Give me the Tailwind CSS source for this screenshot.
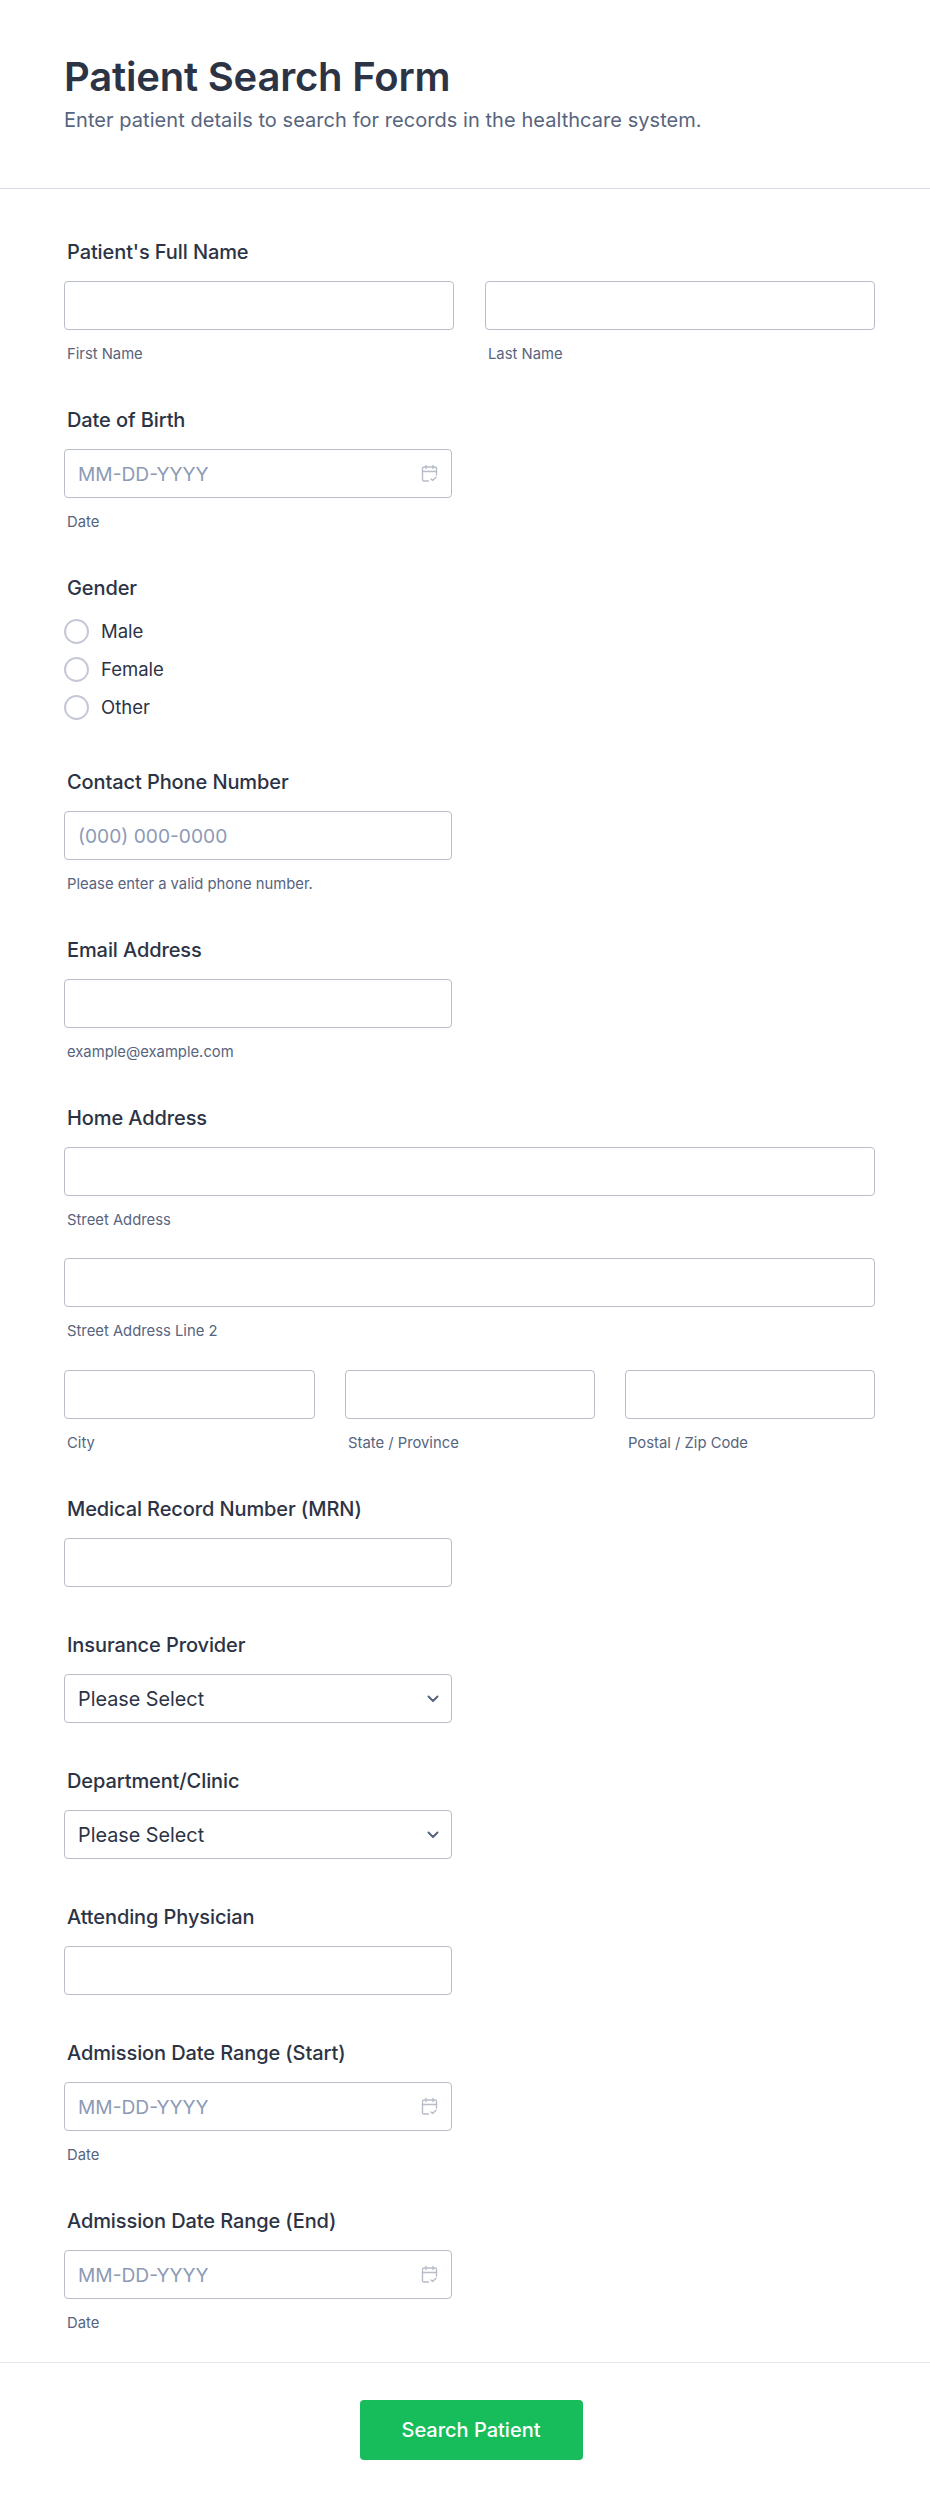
<!DOCTYPE html>
<html lang="en">
<head>
  <meta charset="UTF-8" />
  <title>Patient Search Form</title>
  <script src="https://cdn.jsdelivr.net/npm/@tailwindcss/browser@4"></script>
</head>
<body class="bg-white font-['Inter',sans-serif] text-[#2c3345]">
  <form class="w-[930px] h-[2509px] flex flex-col">
    <header class="h-[189px] border-b border-[#d8dae9] px-16 pt-[53px]">
      <h1 class="text-[40px] leading-[48px] font-semibold tracking-[-0.2px]">Patient Search Form</h1>
      <p class="mt-[5px] text-[20px] leading-[28px] tracking-[0.05px] text-[#57647e]">Enter patient details to search for records in the healthcare system.</p>
    </header>

    <div class="flex-1 pl-16 pr-[55px] pt-[49px] flex flex-col">
      <!-- name -->
      <div class="h-[168px]">
        <label class="block pl-[3px] text-[20px] leading-[28px] font-medium tracking-[-0.1px]">Patient's Full Name</label>
        <div class="mt-[15px] flex gap-[31px]">
          <div class="w-[390px]">
            <input class="w-full h-[49px] border border-[#b8bdc9] rounded" />
            <p class="mt-[14px] pl-[3px] text-[14.8px] leading-[20px] text-[#57647e]">First Name</p>
          </div>
          <div class="w-[390px]">
            <input class="w-full h-[49px] border border-[#b8bdc9] rounded" />
            <p class="mt-[14px] pl-[3px] text-[14.8px] leading-[20px] text-[#57647e]">Last Name</p>
          </div>
        </div>
      </div>

      <!-- dob -->
      <div class="h-[168px]">
        <label class="block pl-[3px] text-[20px] leading-[28px] font-medium tracking-[-0.1px]">Date of Birth</label>
        <div class="mt-[15px] relative w-[388px]">
          <input placeholder="MM-DD-YYYY" class="w-full h-[49px] border border-[#b8bdc9] rounded px-[13px] text-[19.2px] placeholder:text-[#8d9ab5]" />
          <svg class="absolute right-[13px] top-[15px] w-[19px] h-[19px] text-[#b8bdc9]" viewBox="0 0 18 19" fill="none" stroke="currentColor" stroke-width="1.4" stroke-linecap="round" stroke-linejoin="round"><path d="M8 17H3.5A1.5 1.5 0 0 1 2 15.5V4.5A1.5 1.5 0 0 1 3.5 3h11A1.5 1.5 0 0 1 16 4.5V11" /><path d="M2 7.5h14M5.5 1.5v3M12.5 1.5v3" /><path d="M10.5 15l1.6 1.6 3.4-3.4" /></svg>
        </div>
        <p class="mt-[14px] pl-[3px] text-[14.8px] leading-[20px] text-[#57647e]">Date</p>
      </div>

      <!-- gender -->
      <div class="h-[194px]">
        <label class="block pl-[3px] text-[20px] leading-[28px] font-medium tracking-[-0.1px]">Gender</label>
        <div class="mt-[17px] flex flex-col gap-[13px]">
          <label class="flex items-center gap-[12px] text-[18.5px] leading-[25px]"><span class="w-[25px] h-[25px] rounded-full border-2 border-[#c5c9d6]"></span><span class="-mt-[1px]">Male</span></label>
          <label class="flex items-center gap-[12px] text-[18.5px] leading-[25px]"><span class="w-[25px] h-[25px] rounded-full border-2 border-[#c5c9d6]"></span><span class="-mt-[1px]">Female</span></label>
          <label class="flex items-center gap-[12px] text-[18.5px] leading-[25px]"><span class="w-[25px] h-[25px] rounded-full border-2 border-[#c5c9d6]"></span><span class="-mt-[1px]">Other</span></label>
        </div>
      </div>

      <!-- phone -->
      <div class="h-[168px]">
        <label class="block pl-[3px] text-[20px] leading-[28px] font-medium tracking-[-0.1px]">Contact Phone Number</label>
        <input placeholder="(000) 000-0000" class="mt-[15px] block w-[388px] h-[49px] border border-[#b8bdc9] rounded px-[13px] text-[19.2px] placeholder:text-[#8d9ab5]" />
        <p class="mt-[14px] pl-[3px] text-[14.8px] leading-[20px] text-[#57647e]">Please enter a valid phone number.</p>
      </div>

      <!-- email -->
      <div class="h-[168px]">
        <label class="block pl-[3px] text-[20px] leading-[28px] font-medium tracking-[-0.1px]">Email Address</label>
        <input class="mt-[15px] block w-[388px] h-[49px] border border-[#b8bdc9] rounded" />
        <p class="mt-[14px] pl-[3px] text-[14.8px] leading-[20px] text-[#57647e]">example@example.com</p>
      </div>

      <!-- address -->
      <div class="h-[391px]">
        <label class="block pl-[3px] text-[20px] leading-[28px] font-medium tracking-[-0.1px]">Home Address</label>
        <input class="mt-[15px] block w-[811px] h-[49px] border border-[#b8bdc9] rounded" />
        <p class="mt-[14px] pl-[3px] text-[14.8px] leading-[20px] text-[#57647e]">Street Address</p>
        <input class="mt-[28px] block w-[811px] h-[49px] border border-[#b8bdc9] rounded" />
        <p class="mt-[14px] pl-[3px] text-[14.8px] leading-[20px] text-[#57647e]">Street Address Line 2</p>
        <div class="mt-[29px] flex gap-[30px]">
          <div class="w-[251px]">
            <input class="w-full h-[49px] border border-[#b8bdc9] rounded" />
            <p class="mt-[14px] pl-[3px] text-[14.8px] leading-[20px] text-[#57647e]">City</p>
          </div>
          <div class="w-[250px]">
            <input class="w-full h-[49px] border border-[#b8bdc9] rounded" />
            <p class="mt-[14px] pl-[3px] text-[14.8px] leading-[20px] text-[#57647e]">State / Province</p>
          </div>
          <div class="w-[250px]">
            <input class="w-full h-[49px] border border-[#b8bdc9] rounded" />
            <p class="mt-[14px] pl-[3px] text-[14.8px] leading-[20px] text-[#57647e]">Postal / Zip Code</p>
          </div>
        </div>
      </div>

      <!-- mrn -->
      <div class="h-[136px]">
        <label class="block pl-[3px] text-[20px] leading-[28px] font-medium tracking-[-0.1px]">Medical Record Number (MRN)</label>
        <input class="mt-[15px] block w-[388px] h-[49px] border border-[#b8bdc9] rounded" />
      </div>

      <!-- insurance -->
      <div class="h-[136px]">
        <label class="block pl-[3px] text-[20px] leading-[28px] font-medium tracking-[-0.1px]">Insurance Provider</label>
        <div class="mt-[15px] relative w-[388px]">
          <select class="w-full h-[49px] appearance-none border border-[#b8bdc9] rounded px-[13px] pt-[2px] text-[19.8px] bg-white"><option>Please Select</option></select>
          <svg class="absolute right-[13px] top-[21px] w-[12px] h-[8px] text-[#57647e]" viewBox="0 0 12 8" fill="none" stroke="currentColor" stroke-width="2" stroke-linecap="round" stroke-linejoin="round"><path d="M1.5 1.5L6 6l4.5-4.5" /></svg>
        </div>
      </div>

      <!-- department -->
      <div class="h-[136px]">
        <label class="block pl-[3px] text-[20px] leading-[28px] font-medium tracking-[-0.1px]">Department/Clinic</label>
        <div class="mt-[15px] relative w-[388px]">
          <select class="w-full h-[49px] appearance-none border border-[#b8bdc9] rounded px-[13px] pt-[2px] text-[19.8px] bg-white"><option>Please Select</option></select>
          <svg class="absolute right-[13px] top-[21px] w-[12px] h-[8px] text-[#57647e]" viewBox="0 0 12 8" fill="none" stroke="currentColor" stroke-width="2" stroke-linecap="round" stroke-linejoin="round"><path d="M1.5 1.5L6 6l4.5-4.5" /></svg>
        </div>
      </div>

      <!-- physician -->
      <div class="h-[136px]">
        <label class="block pl-[3px] text-[20px] leading-[28px] font-medium tracking-[-0.1px]">Attending Physician</label>
        <input class="mt-[15px] block w-[388px] h-[49px] border border-[#b8bdc9] rounded" />
      </div>

      <!-- admission start -->
      <div class="h-[168px]">
        <label class="block pl-[3px] text-[20px] leading-[28px] font-medium tracking-[-0.1px]">Admission Date Range (Start)</label>
        <div class="mt-[15px] relative w-[388px]">
          <input placeholder="MM-DD-YYYY" class="w-full h-[49px] border border-[#b8bdc9] rounded px-[13px] text-[19.2px] placeholder:text-[#8d9ab5]" />
          <svg class="absolute right-[13px] top-[15px] w-[19px] h-[19px] text-[#b8bdc9]" viewBox="0 0 18 19" fill="none" stroke="currentColor" stroke-width="1.4" stroke-linecap="round" stroke-linejoin="round"><path d="M8 17H3.5A1.5 1.5 0 0 1 2 15.5V4.5A1.5 1.5 0 0 1 3.5 3h11A1.5 1.5 0 0 1 16 4.5V11" /><path d="M2 7.5h14M5.5 1.5v3M12.5 1.5v3" /><path d="M10.5 15l1.6 1.6 3.4-3.4" /></svg>
        </div>
        <p class="mt-[14px] pl-[3px] text-[14.8px] leading-[20px] text-[#57647e]">Date</p>
      </div>

      <!-- admission end -->
      <div>
        <label class="block pl-[3px] text-[20px] leading-[28px] font-medium tracking-[-0.1px]">Admission Date Range (End)</label>
        <div class="mt-[15px] relative w-[388px]">
          <input placeholder="MM-DD-YYYY" class="w-full h-[49px] border border-[#b8bdc9] rounded px-[13px] text-[19.2px] placeholder:text-[#8d9ab5]" />
          <svg class="absolute right-[13px] top-[15px] w-[19px] h-[19px] text-[#b8bdc9]" viewBox="0 0 18 19" fill="none" stroke="currentColor" stroke-width="1.4" stroke-linecap="round" stroke-linejoin="round"><path d="M8 17H3.5A1.5 1.5 0 0 1 2 15.5V4.5A1.5 1.5 0 0 1 3.5 3h11A1.5 1.5 0 0 1 16 4.5V11" /><path d="M2 7.5h14M5.5 1.5v3M12.5 1.5v3" /><path d="M10.5 15l1.6 1.6 3.4-3.4" /></svg>
        </div>
        <p class="mt-[14px] pl-[3px] text-[14.8px] leading-[20px] text-[#57647e]">Date</p>
      </div>
    </div>

    <footer class="h-[147px] border-t border-[#e3e8f0] flex justify-center pt-[37px] pl-[12px]">
      <button type="button" class="w-[223px] h-[60px] rounded bg-[#18bd5b] text-white text-[20px] font-medium">Search Patient</button>
    </footer>
  </form>
</body>
</html>
